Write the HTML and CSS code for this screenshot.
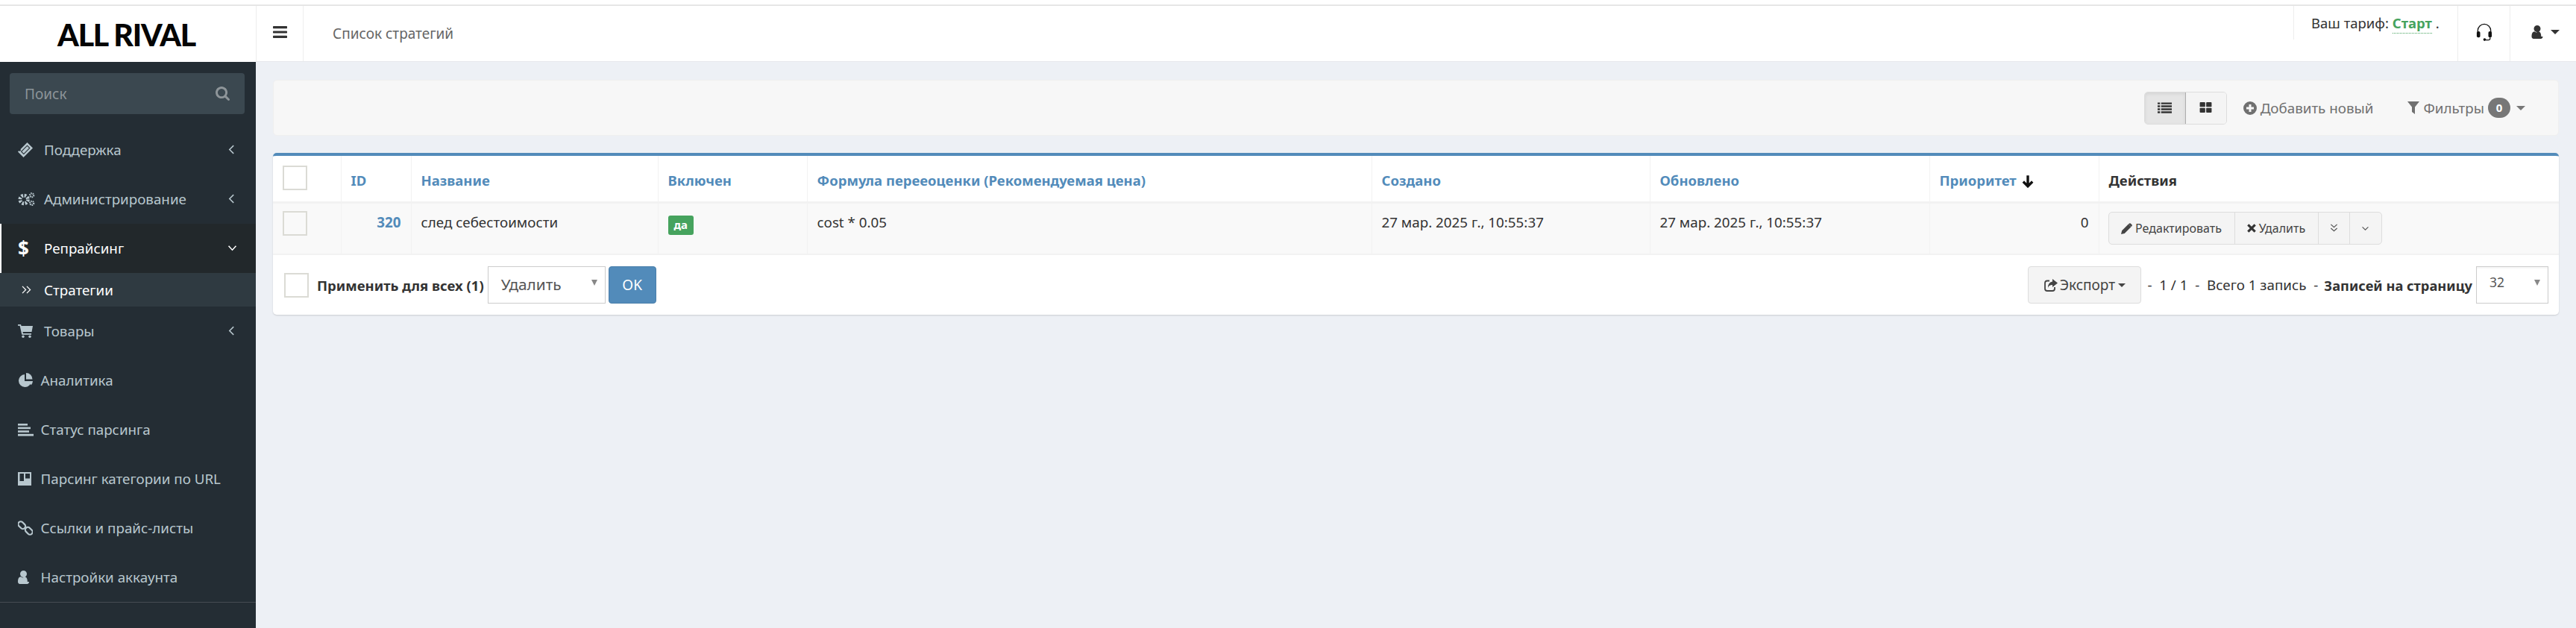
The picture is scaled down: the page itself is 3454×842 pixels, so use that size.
FILE: index.html
```html
<!DOCTYPE html>
<html lang="ru">
<head>
<meta charset="utf-8">
<title>Список стратегий</title>
<link rel="stylesheet" href="styles.css">
</head>
<body>
<div class="topline"></div>
<header class="header">
  <div class="logo">ALL RIVAL</div>
  <div class="head-main">
    <div class="burger"><svg class="ic-burger" viewBox="128 256 1536 1280"><path d="M1664 1344v128q0 26-19 45t-45 19H192q-26 0-45-19t-19-45v-128q0-26 19-45t45-19h1408q26 0 45 19t19 45zm0-512v128q0 26-19 45t-45 19H192q-26 0-45-19t-19-45V832q0-26 19-45t45-19h1408q26 0 45 19t19 45zm0-512v128q0 26-19 45t-45 19H192q-26 0-45-19t-19-45V320q0-26 19-45t45-19h1408q26 0 45 19t19 45z"/></svg></div>
    <div class="page-title">Список стратегий</div>
    <div class="tariff">Ваш тариф: <b class="plan">Старт</b> .</div>
    <div class="head-cell head-support">
      <svg class="ic-headset" viewBox="0 0 24 26"><path class="line" d="M2.500 14V11a9.500 9.500 0 0 1 19 0v3"/><rect x="1" y="12" width="5" height="9" rx="2.200"/><rect x="18" y="12" width="5" height="9" rx="2.200"/><path class="line" d="M20.500 21v1.500q0 2-2.500 2h-4"/><circle cx="12.500" cy="24" r="2"/></svg>
    </div>
    <div class="head-cell head-user">
      <svg class="ic-user" viewBox="256 128 1280 1536"><path d="M1536 1399q0 109-62.500 187t-150.500 78H469q-88 0-150.500-78T256 1399q0-85 8.500-160.500t31.500-152 58.500-131 94-89T583 832q101 99 213 99t213-99q85 0 145 35t94 89 58.500 131 31.500 152 8.500 160zM1280 512q0 159-112.500 271.500T896 896 624.500 783.500 512 512t112.500-271.500T896 128t271.500 112.500T1280 512z"/></svg>
      <span class="caret caret-user"></span>
    </div>
  </div>
</header>
<div class="layout">
  <aside class="sidebar">
    <div class="search">
      <span>Поиск</span>
      <svg class="ic-search" viewBox="64 128 1664 1664"><path d="M1216 832q0-185-131.500-316.500T768 384 451.500 515.500 320 832t131.500 316.500T768 1280t316.500-131.500T1216 832zm512 832q0 52-38 90t-90 38q-54 0-90-38l-343-342q-179 124-399 124-143 0-273.500-55.500t-225-150-150-225T64 832t55.500-273.500 150-225 225-150T768 128t273.500 55.500 225 150 150 225T1472 832q0 220-124 399l343 343q37 37 37 90z"/></svg>
    </div>
    <nav class="menu">
      <a class="item wide">
        <svg class="ic" viewBox="0 0 20 20"><path fill-rule="evenodd" d="M12.500 0 20 7.500 7.500 20 0 12.500l1.500-1.500 1 1 1.800-1.800-1-1zM12.500 3.500 3.800 12.200 7.800 16.200 16.500 7.500z"/><path d="M12.500 5 15 7.500 7.800 14.700 5.300 12.200z"/></svg>
        <span class="label">Поддержка</span>
        <svg class="chev" viewBox="0 0 10 16"><path d="M8 2 2 8l6 6"/></svg>
      </a>
      <a class="item wide">
        <svg class="ic ic-cogs" viewBox="0 0 24 20"><circle class="gear" cx="8.500" cy="10.500" r="5.500"/><circle class="gear-sm" cx="19.500" cy="4.500" r="2.600"/><circle class="gear-sm" cx="19.500" cy="15.500" r="2.600"/></svg>
        <span class="label">Администрирование</span>
        <svg class="chev" viewBox="0 0 10 16"><path d="M8 2 2 8l6 6"/></svg>
      </a>
      <a class="item wide active">
        <span class="dollar">$</span>
        <span class="label">Репрайсинг</span>
        <svg class="chev chev-down" viewBox="0 0 14 10"><path d="M1.500 2 7 8l5.500-6"/></svg>
      </a>
      <a class="subitem">
        <svg class="dbl" viewBox="0 0 14 12"><path d="M1 1l5 5-5 5M7.500 1l5 5-5 5"/></svg>
        <span class="label">Стратегии</span>
      </a>
      <a class="item wide">
        <svg class="ic ic-cart" viewBox="0 0 20 18"><path d="M0 0h4l.6 2H20l-1.500 8H6.500l.4 2H18v1.800H5.300L2.600 1.800H0z"/><circle cx="7" cy="16.300" r="1.700"/><circle cx="16" cy="16.300" r="1.700"/></svg>
        <span class="label">Товары</span>
        <svg class="chev" viewBox="0 0 10 16"><path d="M8 2 2 8l6 6"/></svg>
      </a>
      <a class="item">
        <span class="ibox"><svg class="ic ic-pie" viewBox="0 0 20 20"><path d="M9 2v9h9a8.500 8.500 0 1 1-9-9z"/><path d="M11 0a8.500 8.500 0 0 1 8.500 8.500H11z"/><path d="M12.500 11H20a8.500 8.500 0 0 1-2.300 5.300z"/></svg></span>
        <span class="label">Аналитика</span>
      </a>
      <a class="item">
        <span class="ibox"><svg class="ic ic-align" viewBox="0 0 21 17"><rect width="13" height="2.600"/><rect y="4.600" width="17" height="2.600"/><rect y="9.200" width="15" height="2.600"/><rect y="13.800" width="21" height="2.800"/></svg></span>
        <span class="label">Статус парсинга</span>
      </a>
      <a class="item">
        <span class="ibox"><svg class="ic ic-trello" viewBox="0 0 18 18"><path fill-rule="evenodd" d="M0 0h18v18H0zM2.500 2v10H8V2zM10 2v6.500h6V2z"/></svg></span>
        <span class="label">Парсинг категории по URL</span>
      </a>
      <a class="item">
        <span class="ibox"><svg class="ic ic-link" viewBox="0 0 20 20"><g class="ring"><rect x="-.3" y="2.700" width="11" height="7" rx="3.500" transform="rotate(45 5.200 6.200)"/><rect x="9.300" y="10.300" width="11" height="7" rx="3.500" transform="rotate(45 14.800 13.800)"/></g></svg></span>
        <span class="label">Ссылки и прайс-листы</span>
      </a>
      <a class="item">
        <span class="ibox"><svg class="ic ic-person" viewBox="256 128 1280 1536"><path d="M1536 1399q0 109-62.500 187t-150.500 78H469q-88 0-150.500-78T256 1399q0-85 8.500-160.500t31.500-152 58.500-131 94-89T583 832q101 99 213 99t213-99q85 0 145 35t94 89 58.500 131 31.500 152 8.500 160zM1280 512q0 159-112.500 271.500T896 896 624.500 783.500 512 512t112.500-271.500T896 128t271.500 112.500T1280 512z"/></svg></span>
        <span class="label">Настройки аккаунта</span>
      </a>
    </nav>
    <div class="side-sep"></div>
  </aside>
  <main class="content">
    <section class="toolbar">
      <div class="viewswitch">
        <span class="vbtn vbtn-on"><svg class="ic-list" viewBox="0 0 20 15"><path d="M0 0h3.500v2.500H0zM5 0h15v2.500H5zM0 4.200h3.500v2.600H0zM5 4.200h15v2.600H5zM0 8.400h3.500V11H0zM5 8.400h15V11H5zM0 12.500h3.500V15H0zM5 12.500h15V15H5z"/></svg></span>
        <span class="vbtn"><svg class="ic-grid" viewBox="0 0 17 15"><rect width="7.800" height="6.800" rx="1"/><rect x="9.200" width="7.800" height="6.800" rx="1"/><rect y="8.200" width="7.800" height="6.800" rx="1"/><rect x="9.200" y="8.200" width="7.800" height="6.800" rx="1"/></svg></span>
      </div>
      <a class="tool add"><svg class="ic-plus" viewBox="0 0 18 18"><path fill-rule="evenodd" d="M9 0a9 9 0 1 1 0 18A9 9 0 0 1 9 0zM7.500 4v3.500H4v3h3.500V14h3v-3.500H14v-3h-3.500V4z"/></svg>Добавить новый</a>
      <a class="tool filters"><svg class="ic-filter" viewBox="0 0 16 17"><path d="M0 0h16L10 7.500V17L6 14V7.500z"/></svg>Фильтры<span class="badge">0</span><span class="caret caret-filter"></span></a>
    </section>
    <section class="box">
      <table class="grid">
        <colgroup><col class="c1"><col class="c2"><col class="c3"><col class="c4"><col class="c5"><col class="c6"><col class="c7"><col class="c8"><col></colgroup>
        <thead>
          <tr>
            <th><span class="check"></span></th>
            <th><a>ID</a></th>
            <th><a>Название</a></th>
            <th><a>Включен</a></th>
            <th><a>Формула перееоценки (Рекомендуемая цена)</a></th>
            <th><a>Создано</a></th>
            <th><a>Обновлено</a></th>
            <th><a>Приоритет</a> <svg class="ic-arrow" viewBox="0 0 14 16"><path d="M7 1v13M1.500 8.500 7 14l5.500-5.500"/></svg></th>
            <th>Действия</th>
          </tr>
        </thead>
        <tbody>
          <tr>
            <td class="top-check"><span class="check check-row"></span></td>
            <td class="num"><a>320</a></td>
            <td>след себестоимости</td>
            <td><span class="tag">да</span></td>
            <td>cost * 0.05</td>
            <td>27 мар. 2025 г., 10:55:37</td>
            <td>27 мар. 2025 г., 10:55:37</td>
            <td class="right">0</td>
            <td class="acts">
              <div class="actions">
                <a class="act act-edit"><svg class="ic-pencil" viewBox="0 0 16 16"><path d="M0 16l1.200-5L10.500 1.700l3.800 3.800L5 14.800zM11.500.7q1-1 2-.2l2 2q.8 1-.2 2l-.8.800-3.800-3.800z"/></svg>Редактировать</a>
                <a class="act act-del"><svg class="ic-x" viewBox="0 0 14 14"><path d="M1.500 1.500l11 11M12.500 1.500l-11 11"/></svg>Удалить</a>
                <a class="act act-more"><svg class="ic-dbl" viewBox="0 0 12 14"><path d="M1.500 2 6 6l4.500-4M1.500 7.500 6 11.500l4.500-4"/></svg></a>
                <a class="act act-last"><svg class="ic-one" viewBox="0 0 12 8"><path d="M1.500 1.500 6 6l4.500-4.500"/></svg></a>
              </div>
            </td>
          </tr>
        </tbody>
      </table>
      <div class="foot">
        <div class="foot-side">
          <span class="check"></span>
          <b class="apply">Применить для всех (1)</b>
          <div class="select select-action">Удалить<span class="sel-arrow"></span></div>
          <a class="ok">OK</a>
        </div>
        <div class="foot-side">
          <a class="export"><svg class="ic-share" viewBox="0 0 18 17"><path class="line" d="M7 2.500H4q-3 0-3 3V13q0 3 3 3h7q3 0 3-3v-2"/><path d="M11 0l7 5.500-7 5.500V8Q6 8 5 12 4.500 5 11 3.500z"/></svg>Экспорт<span class="caret caret-export"></span></a>
          <span class="pager">-&nbsp; 1 / 1 &nbsp;-&nbsp; Всего 1 запись &nbsp;-</span>
          <b class="perpage">Записей на страницу</b>
          <div class="select select-page">32<span class="sel-arrow"></span></div>
        </div>
      </div>
    </section>
  </main>
</div>
</body>
</html>
```
FILE: styles.css
```css
* { box-sizing: border-box; }
html, body { margin: 0; height: 842px; overflow: hidden; }
body { font-family: "Noto Sans", "Liberation Sans", sans-serif; font-size: 18.800px; color: #333; background: #fff; }
a { color: inherit; text-decoration: none; }
svg { display: block; flex: none; fill: currentColor; }

.topline { height: 8px; border-bottom: 2px solid #e6e6e6; }

.header { display: flex; height: 75px; background: #fff; }
.logo { width: 343px; padding-right: 4px; padding-top: 2px; text-align: center; font-family: Lato, "Noto Sans", sans-serif; font-weight: 900; font-size: 41px; line-height: 73px; letter-spacing: -1.200px; color: #050505; }
.head-main { flex: 1; display: flex; border-left: 1px solid #ededed; border-bottom: 1px solid #e6e8ec; min-width: 0; }
.burger { width: 63px; border-right: 1px solid #ededed; display: flex; align-items: center; justify-content: center; padding-bottom: 4px; }
.ic-burger { width: 19px; height: 16px; color: #333; }
.page-title { flex: 1; padding-left: 39px; font-size: 19px; line-height: 74px; color: #666; }
.tariff { width: 220px; height: 45px; border-left: 1px solid #ededed; padding: 11px 0 0 23px; font-size: 18.500px; line-height: 24px; color: #333; white-space: nowrap; }
.plan { color: #46a35e; font-weight: 700; border-bottom: 1px dotted #46a35e; padding-bottom: 1px; }
.head-cell { display: flex; align-items: center; justify-content: center; border-left: 1px solid #ededed; padding-bottom: 5px; }
.head-support { width: 70px; }
.head-user { width: 89px; gap: 10px; justify-content: flex-start; padding-left: 28px; }
.ic-headset { width: 22px; height: 24px; color: #111; }
.ic-headset .line { fill: none; stroke: currentColor; stroke-width: 1.400; }
.ic-user { width: 16px; height: 18px; color: #333; }
.caret { display: block; width: 0; height: 0; border-left: 6px solid transparent; border-right: 6px solid transparent; border-top: 6px solid #333; }
.caret-user { border-left-width: 6.500px; border-right-width: 6.500px; }

.layout { display: flex; height: 759px; }
.sidebar { width: 343px; flex: none; background: #242d34; padding-top: 15px; color: #b8c7ce; }
.search { margin: 0 15px 0 13px; height: 55px; background: #3b4850; border-radius: 4px; display: flex; align-items: center; justify-content: space-between; padding: 0 20px; color: #8c9499; font-size: 19px; }
.ic-search { width: 19px; height: 19px; color: #8e9599; }
.menu { margin-top: 15px; }
.item { display: flex; align-items: center; height: 66px; padding: 0 24px; position: relative; }
.ibox { width: 30.500px; flex: none; }
.item.wide .label { position: absolute; left: 59px; }
.ic { width: 20px; height: 20px; }
.ic-cogs { width: 23px; height: 20px; }
.gear { fill: none; stroke: currentColor; stroke-width: 5; stroke-dasharray: 2.600 1.700; }
.gear-sm { fill: none; stroke: currentColor; stroke-width: 2.400; stroke-dasharray: 1.600 1; }
.ic-cart { width: 20px; height: 18px; }
.ic-align { width: 21px; height: 17px; }
.ic-trello { width: 18px; height: 18px; }
.ic-link { width: 20px; height: 20px; }
.ring { fill: none; stroke: currentColor; stroke-width: 2.200; }
.ic-person { width: 15px; height: 18px; }
.chev { position: absolute; left: 306px; top: 25px; width: 9px; height: 15px; fill: none; stroke: #b8c7ce; stroke-width: 1.700; }
.item.active { background: #22282b; color: #fff; border-left: 2px solid #fff; padding-left: 22px; }
.item.active .label { left: 57px; }
.item.active .chev-down { left: 303px; top: 28px; width: 13px; height: 9px; stroke: #fff; }
.dollar { font-weight: 700; font-size: 26px; line-height: 1; width: 14px; }
.subitem { display: flex; align-items: center; height: 45px; background: #2f3a41; color: #fff; padding-left: 29px; }
.dbl { width: 13px; height: 11px; fill: none; stroke: #fff; stroke-width: 1.400; }
.subitem .label { margin-left: 17px; }
.side-sep { height: 1px; background: #454c52; }

.content { flex: 1; min-width: 0; background: #edf0f5; padding: 24px 23px 0 23px; }
.toolbar { height: 75px; background: #f7f7f7; border: 1px solid #efefef; border-radius: 5px; display: flex; align-items: center; justify-content: flex-end; padding-right: 44px; color: #707070; }
.viewswitch { display: flex; height: 44px; margin-right: 22px; border: 1px solid #ddd; border-radius: 5px; }
.vbtn { width: 54px; display: flex; align-items: center; justify-content: center; background: #f4f4f4; color: #333; border-radius: 0 4px 4px 0; padding-bottom: 1px; }
.vbtn-on { width: 55px; background: #e5e5e5; border-right: 1px solid #adadad; border-radius: 4px 0 0 4px; box-shadow: inset 0 2px 4px rgba(0,0,0,.08); }
.ic-list { width: 19px; height: 15px; }
.ic-grid { width: 17px; height: 14px; }
.tool { display: flex; align-items: center; }
.add { margin-right: 46px; }
.ic-plus { width: 18px; height: 18px; margin-right: 5px; }
.ic-filter { width: 16px; height: 17px; margin-right: 5px; }
.badge { width: 30px; height: 27px; border-radius: 14px; background: #777; color: #fff; font-size: 15px; font-weight: 700; text-align: center; line-height: 27px; margin-left: 5px; }
.caret-filter { margin-left: 8px; border-top-color: #777; }

.box { margin-top: 23px; background: #fff; border-top: 4px solid #528bba; border-radius: 5px; box-shadow: 0 1px 2px rgba(0,0,0,.15); height: 217px; }
.grid { width: 100%; border-collapse: collapse; table-layout: fixed; }
.c1 { width: 91px; } .c2 { width: 94px; } .c3 { width: 331px; } .c4 { width: 200px; } .c5 { width: 757px; } .c6 { width: 373px; } .c7 { width: 375px; } .c8 { width: 227px; }
th { height: 62px; text-align: left; font-weight: 700; font-size: 18.500px; padding: 4px 13px 0; border-left: 1px solid #f2f2f2; border-bottom: 3px solid #f2f2f2; color: #333; white-space: nowrap; }
th:first-child, td:first-child { border-left: 0; }
th:first-child { padding-top: 0; padding-bottom: 2px; }
th a, td.num a { color: #528bba; font-weight: 700; }
th .ic-arrow { display: inline-block; vertical-align: -3px; width: 16px; height: 18px; margin-left: 3px; fill: none; stroke: #111; stroke-width: 3; }
td { height: 70px; padding: 0 13px 16px; background: #f9f9f9; border-left: 1px solid #f2f2f2; border-bottom: 2px solid #f2f2f2; white-space: nowrap; }
td.num, td.right { text-align: right; }
td.acts { padding: 0 13px 0 12px; }
.check { display: block; width: 33px; height: 33px; border: 2px solid #dbdbd5; background: #fff; flex: none; }
.check-row { background: #f9f9f9; }
td.top-check { padding-bottom: 14px; }
.tag { display: inline-block; background: #46a35e; color: #fff; font-size: 15px; font-weight: 700; line-height: 25px; height: 26px; padding: 0 8px; border-radius: 3px; vertical-align: -6px; }
.actions { display: inline-flex; height: 44px; border: 1px solid #ddd; border-radius: 5px; background: #f4f4f4; font-size: 16px; color: #444; vertical-align: top; }
.act { display: flex; align-items: center; justify-content: center; border-left: 1px solid #ddd; }
.act:first-child { border-left: 0; }
.act-edit { width: 168px; }
.act-del { width: 112px; }
.act-more { width: 42px; }
.act-last { width: 43px; }
.ic-pencil { width: 15px; height: 15px; margin-right: 4px; }
.ic-x { width: 12px; height: 12px; margin-right: 4px; fill: none; stroke: #333; stroke-width: 3.600; }
.ic-dbl { width: 11px; height: 13px; fill: none; stroke: #555; stroke-width: 1.300; margin-bottom: 2px; }
.ic-one { width: 11px; height: 7px; fill: none; stroke: #555; stroke-width: 1.300; }

.foot { display: flex; align-items: flex-start; justify-content: space-between; padding: 15px 14px 0 15px; }
.foot-side { display: flex; align-items: center; height: 50px; }
.apply { margin-left: 11px; white-space: nowrap; font-size: 18.500px; }
.select { position: relative; height: 50px; border: 1px solid #ccc; background: #fff; color: #555; }
.select-action { width: 158px; margin-left: 5px; padding-left: 17px; font-size: 20.800px; line-height: 46px; }
.select-page { width: 97px; margin-left: 5px; padding-left: 17px; font-size: 17.500px; line-height: 40px; box-shadow: inset 0 2px 2px rgba(0,0,0,.04); }
.sel-arrow { position: absolute; right: 10px; top: 17px; width: 0; height: 0; border-left: 4px solid transparent; border-right: 4px solid transparent; border-top: 8px solid #888; }
.ok { width: 64px; height: 50px; margin-left: 4px; background: #528bba; border: 1px solid #4a7fab; border-radius: 4px; color: #fff; font-size: 19px; text-align: center; line-height: 48px; }
.export { display: flex; align-items: center; justify-content: center; width: 152px; height: 50px; background: #f4f4f4; border: 1px solid #ddd; border-radius: 4px; font-size: 19px; color: #444; }
.ic-share { width: 18px; height: 17px; margin-right: 3px; }
.ic-share .line { fill: none; stroke: currentColor; stroke-width: 1.800; }
.caret-export { margin-left: 4px; border-left-width: 5px; border-right-width: 5px; border-top-width: 5px; border-top-color: #444; }
.pager { margin-left: 8px; white-space: nowrap; }
.perpage { margin-left: 8px; white-space: nowrap; font-size: 18.300px; }
```
